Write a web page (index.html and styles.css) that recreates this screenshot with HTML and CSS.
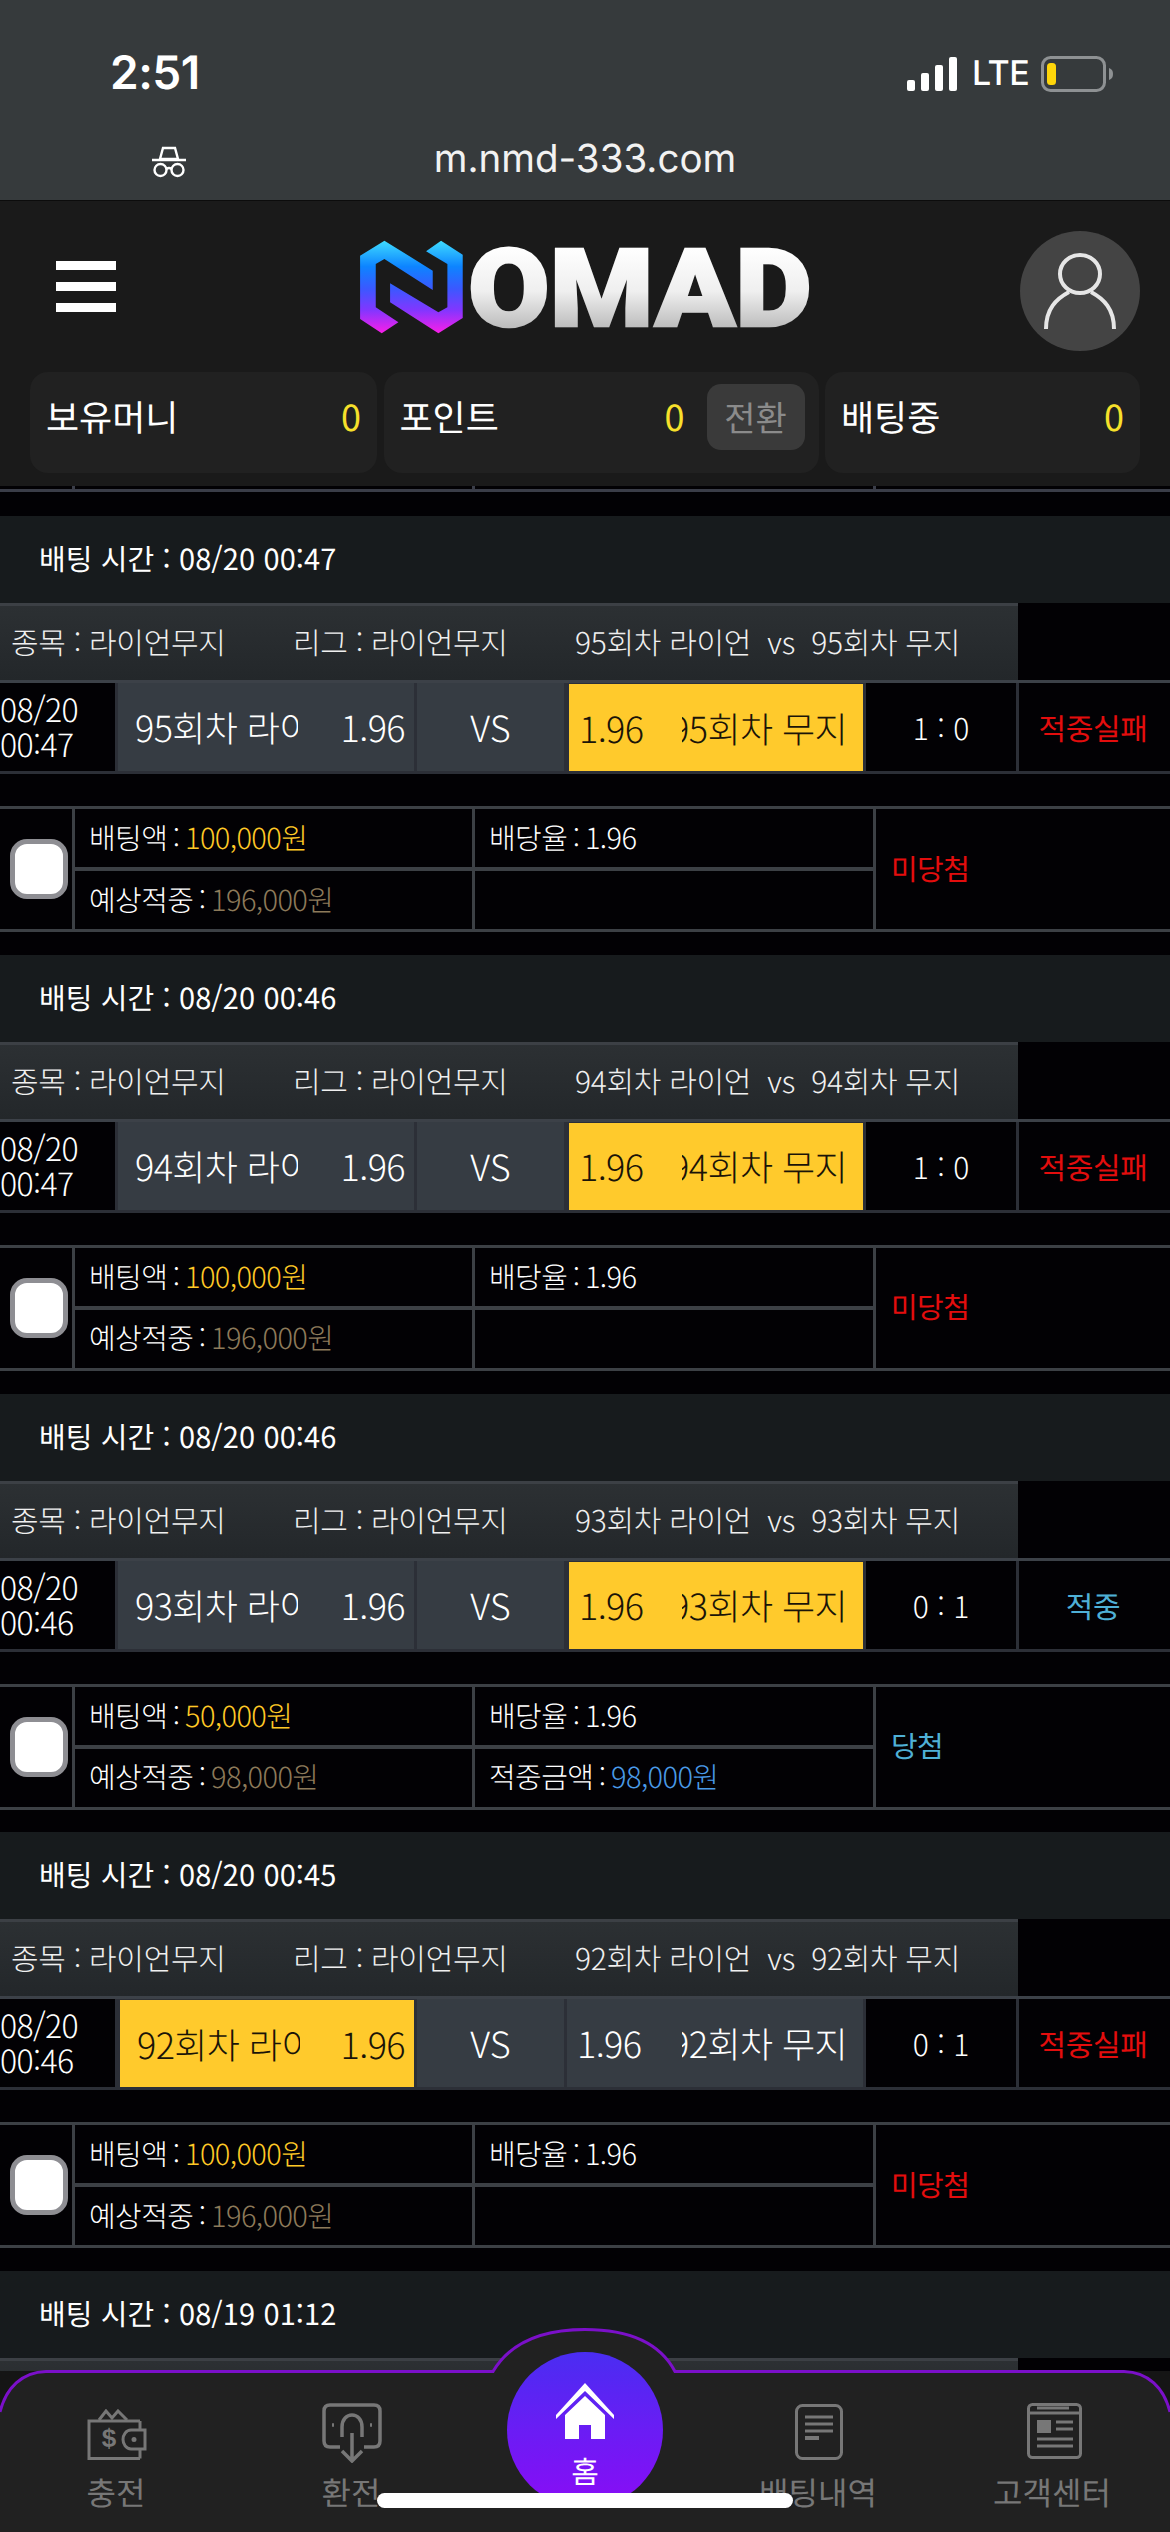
FILE: index.html
```html
<!DOCTYPE html>
<html lang="ko">
<head>
<meta charset="utf-8">
<title>NOMAD</title>
<link rel="stylesheet" href="styles.css">
</head>
<body>
<div class="chrome">
  <div class="status">
    <span class="clock">2:51</span>
    <div class="status-right">
      <svg class="signal" viewBox="0 0 51 34"><rect x="0" y="23" width="8" height="11" rx="2"/><rect x="14" y="16" width="8" height="18" rx="2"/><rect x="28" y="8" width="8" height="26" rx="2"/><rect x="42" y="0" width="8" height="34" rx="2"/></svg>
      <span class="lte">LTE</span>
      <svg class="battery" viewBox="0 0 72 36"><rect x="1.5" y="1.5" width="62" height="33" rx="8" fill="none" stroke="#8e9193" stroke-width="3"/><rect x="6" y="7" width="9" height="22" rx="3.5" fill="#ffd60a"/><path d="M68 12c3 1 4 3 4 6s-1 5-4 6z" fill="#8e9193"/></svg>
    </div>
  </div>
  <div class="urlbar">
    <svg class="spy" viewBox="0 0 36 32" fill="none" stroke="#fff" stroke-width="2.4"><path d="M12 2h12l3 11H9z"/><path d="M1 14h34"/><circle cx="9.5" cy="24" r="6"/><circle cx="26.5" cy="24" r="6"/><path d="M15.500 23q2.500-2 5 0"/></svg>
    <span class="url">m.nmd-333.com</span>
  </div>
</div>

<header class="site-head">
  <div class="topbar">
    <div class="burger"><i></i><i></i><i></i></div>
    <svg class="logo" viewBox="60 70 1400 310" aria-label="NOMAD">
      <defs>
        <linearGradient id="ng" x1="0" y1="0" x2="0" y2="1">
          <stop offset="0" stop-color="#3fdcff"/><stop offset=".28" stop-color="#0d84ff"/><stop offset=".52" stop-color="#3b58ff"/><stop offset=".75" stop-color="#8236ff"/><stop offset="1" stop-color="#fb1ee8"/>
        </linearGradient>
        <linearGradient id="sg" gradientUnits="userSpaceOnUse" x1="0" y1="110" x2="0" y2="350">
          <stop offset="0" stop-color="#ffffff"/><stop offset=".55" stop-color="#efefef"/><stop offset="1" stop-color="#bdbdbd"/>
        </linearGradient>
      </defs>
      <path fill="url(#ng)" d="M163 90L308 180V238L163 145L137 160V290L205 335L155 368L90 325V135Z"/>
      <path fill="url(#ng)" d="M333 90L398 132V322L325 368L180 275V218L325 305L352 290V160L288 122Z"/>
      <text class="logo-text" x="414" y="345" textLength="1032" lengthAdjust="spacingAndGlyphs" fill="url(#sg)" stroke="url(#sg)">OMAD</text>
    </svg>
    <div class="avatar">
      <svg viewBox="0 0 120 120" fill="none" stroke="#e6e6e6" stroke-width="4"><ellipse cx="60" cy="43" rx="20" ry="19"/><path d="M26 98C26 78 36 68 49 61"/><path d="M94 98C94 78 84 68 71 61"/></svg>
    </div>
  </div>
  <div class="wallets">
    <div class="wallet w-money"><span>보유머니</span><b>0</b></div>
    <div class="wallet w-point"><span>포인트</span><b>0</b><button class="swap">전환</button></div>
    <div class="wallet w-bet"><span>배팅중</span><b>0</b></div>
  </div>
</header>

<div class="prev-end"><i></i><i></i><i></i></div>

<main class="list">
  <section class="bet">
    <div class="bet-time">배팅 시간 : 08/20 00:47</div>
    <div class="info"><span class="i1">종목 : 라이언무지</span><span class="i2">리그 : 라이언무지</span><span class="i3">95회차 라이언&nbsp; vs&nbsp; 95회차 무지</span></div>
    <div class="match">
      <div class="c-time">08/20<br>00:47</div>
      <div class="c-team"><span class="home-name">95회차 라이언</span><span>1.96</span></div>
      <div class="c-vs">VS</div>
      <div class="c-team away on"><span>1.96</span><span class="away-name"><span>95회차 무지</span></span></div>
      <div class="c-score">1 : 0</div>
      <div class="c-result lose">적중실패</div>
    </div>
    <div class="detail">
      <div class="d-check"><input type="checkbox" class="check"></div>
      <div class="d-cell">배팅액 : <span class="amt">100,000원</span></div>
      <div class="d-cell">배당율 : 1.96</div>
      <div class="d-state lose">미당첨</div>
      <div class="d-cell">예상적중 : <span class="exp">196,000원</span></div>
      <div class="d-cell"></div>
    </div>
  </section>

  <section class="bet">
    <div class="bet-time">배팅 시간 : 08/20 00:46</div>
    <div class="info"><span class="i1">종목 : 라이언무지</span><span class="i2">리그 : 라이언무지</span><span class="i3">94회차 라이언&nbsp; vs&nbsp; 94회차 무지</span></div>
    <div class="match">
      <div class="c-time">08/20<br>00:47</div>
      <div class="c-team"><span class="home-name">94회차 라이언</span><span>1.96</span></div>
      <div class="c-vs">VS</div>
      <div class="c-team away on"><span>1.96</span><span class="away-name"><span>94회차 무지</span></span></div>
      <div class="c-score">1 : 0</div>
      <div class="c-result lose">적중실패</div>
    </div>
    <div class="detail">
      <div class="d-check"><input type="checkbox" class="check"></div>
      <div class="d-cell">배팅액 : <span class="amt">100,000원</span></div>
      <div class="d-cell">배당율 : 1.96</div>
      <div class="d-state lose">미당첨</div>
      <div class="d-cell">예상적중 : <span class="exp">196,000원</span></div>
      <div class="d-cell"></div>
    </div>
  </section>

  <section class="bet">
    <div class="bet-time">배팅 시간 : 08/20 00:46</div>
    <div class="info"><span class="i1">종목 : 라이언무지</span><span class="i2">리그 : 라이언무지</span><span class="i3">93회차 라이언&nbsp; vs&nbsp; 93회차 무지</span></div>
    <div class="match">
      <div class="c-time">08/20<br>00:46</div>
      <div class="c-team"><span class="home-name">93회차 라이언</span><span>1.96</span></div>
      <div class="c-vs">VS</div>
      <div class="c-team away on"><span>1.96</span><span class="away-name"><span>93회차 무지</span></span></div>
      <div class="c-score">0 : 1</div>
      <div class="c-result win">적중</div>
    </div>
    <div class="detail">
      <div class="d-check"><input type="checkbox" class="check"></div>
      <div class="d-cell">배팅액 : <span class="amt">50,000원</span></div>
      <div class="d-cell">배당율 : 1.96</div>
      <div class="d-state win">당첨</div>
      <div class="d-cell">예상적중 : <span class="exp">98,000원</span></div>
      <div class="d-cell">적중금액 : <span class="won">98,000원</span></div>
    </div>
  </section>

  <section class="bet">
    <div class="bet-time">배팅 시간 : 08/20 00:45</div>
    <div class="info"><span class="i1">종목 : 라이언무지</span><span class="i2">리그 : 라이언무지</span><span class="i3">92회차 라이언&nbsp; vs&nbsp; 92회차 무지</span></div>
    <div class="match">
      <div class="c-time">08/20<br>00:46</div>
      <div class="c-team on"><span class="home-name">92회차 라이언</span><span>1.96</span></div>
      <div class="c-vs">VS</div>
      <div class="c-team away"><span>1.96</span><span class="away-name"><span>92회차 무지</span></span></div>
      <div class="c-score">0 : 1</div>
      <div class="c-result lose">적중실패</div>
    </div>
    <div class="detail">
      <div class="d-check"><input type="checkbox" class="check"></div>
      <div class="d-cell">배팅액 : <span class="amt">100,000원</span></div>
      <div class="d-cell">배당율 : 1.96</div>
      <div class="d-state lose">미당첨</div>
      <div class="d-cell">예상적중 : <span class="exp">196,000원</span></div>
      <div class="d-cell"></div>
    </div>
  </section>

  <section class="bet last">
    <div class="bet-time">배팅 시간 : 08/19 01:12</div>
    <div class="info"></div>
  </section>
</main>

<nav class="tabbar">
  <svg class="tab-bg" viewBox="0 0 1170 204">
    <path fill="#151515" d="M0 43H1170V204H0Z"/>
    <path fill="#212121" d="M0 84C6 60 22 44 46 43.500H493C510 15 540 1.500 585 1.500C630 1.500 660 15 675 43.500H1124C1148 44 1164 60 1170 84V204H0Z"/>
    <path fill="none" stroke="#7b10c9" stroke-width="3" d="M0 84C6 60 22 44 46 43.500H493C510 15 540 1.500 585 1.500C630 1.500 660 15 675 43.500H1124C1148 44 1164 60 1170 84"/>
  </svg>
  <a class="tab t-charge">
    <svg class="ico-wallet" viewBox="0 0 60 51" fill="none" stroke="#777" stroke-width="3"><path d="M53 12H2V49.500H53"/><path d="M12 11l7-9 6 7 6-7 9 9"/><path d="M53 12V21M53 40V49.500"/><path d="M44 21H58V40H44C39 40 36 35 36 30.500C36 26 39 21 44 21Z"/><circle cx="47" cy="30.500" r="2.500" fill="#777" stroke="none"/><text class="dollar" x="22" y="38" text-anchor="middle" fill="#777" stroke="none">$</text></svg>
    <span>충전</span>
  </a>
  <a class="tab t-exchange">
    <svg class="ico-ex" viewBox="0 0 60 60" fill="none" stroke="#777" stroke-width="3.500"><path d="M18 44H8Q2 44 2 38V8Q2 2 8 2H52Q58 2 58 8V38Q58 44 52 44H42"/><path d="M20 34V24C20 16 25 12 30 12C35 12 40 16 40 24V34"/><path d="M30 30V57M20 48L30 58L40 48"/><path d="M10 22h2M48 22h2"/></svg>
    <span>환전</span>
  </a>
  <a class="tab t-home">
    <div class="home-disc">
      <svg class="ico-home" viewBox="0 0 58 56" fill="#fff"><path d="M29 0L58 32V36L29 8L0 36V32Z"/><path d="M29 13L49 32V56H35V42H23V56H9V32Z"/></svg>
      <span>홈</span>
    </div>
  </a>
  <a class="tab t-history">
    <svg class="ico-doc" viewBox="0 0 48 56" fill="none" stroke="#777" stroke-width="3"><rect x="1.500" y="1.500" width="45" height="53" rx="6"/><path d="M10 13H38M10 20H38M10 27H38"/><path d="M10 34H24" stroke-width="4"/></svg>
    <span>배팅내역</span>
  </a>
  <a class="tab t-support">
    <svg class="ico-news" viewBox="0 0 55 56" fill="none" stroke="#777" stroke-width="3"><rect x="1.500" y="1.500" width="52" height="53" rx="4"/><path d="M2 10H53M10 5H42" /><rect x="10" y="17" width="14" height="13" fill="#777" stroke="none"/><path d="M29 19H46M29 26H46M10 36H46M10 43H46"/></svg>
    <span>고객센터</span>
  </a>
</nav>
<div class="home-bar"></div>
</body>
</html>
```
FILE: styles.css
```css
* { box-sizing: border-box; }
html, body { margin: 0; padding: 0; }
html { height: 2532px; overflow: hidden; }
body {
  position: relative;
  width: 1170px;
  height: 2532px;
  overflow: hidden;
  background: #020104;
  color: #fff;
  font-family: "Noto Sans CJK KR", "Noto Sans", sans-serif;
  text-rendering: geometricPrecision;
}

/* browser chrome */
.chrome { height: 201px; background: #363a3c; border-bottom: 1px solid #0c0c0c; }
.status { height: 122px; padding: 0 57px 0 110px; display: flex; justify-content: space-between; align-items: flex-start; }
.clock { margin-top: 43px; font: 600 46px/60px Inter, sans-serif; letter-spacing: -.5px; }
.status-right { margin-top: 56px; display: flex; align-items: center; gap: 14px; }
.signal { width: 51px; height: 34px; fill: #fff; }
.lte { font: 500 34px/36px Inter, sans-serif; letter-spacing: -.5px; width: 55px; }
.battery { width: 72px; height: 36px; }
.urlbar { position: relative; height: 78px; display: flex; justify-content: center; align-items: flex-start; }
.spy { position: absolute; left: 151px; top: 24px; width: 36px; height: 32px; }
.url { margin-top: 13px; font: 400 38.500px/48px Inter, sans-serif; color: #f2f2f2; }

/* site header */
.site-head { height: 285px; background: #1a1a1a; padding-top: 30px; }
.topbar { height: 120px; display: flex; justify-content: space-between; align-items: flex-start; padding: 0 30px 0 56px; position: relative; }
.burger { width: 60px; margin-top: 30px; display: flex; flex-direction: column; gap: 12px; }
.burger i { display: block; height: 9px; background: #fff; }
.logo { position: absolute; left: 350px; top: 3px; width: 466.700px; height: 103.300px; }
.logo-text { font: 900 326px Roboto, sans-serif; stroke-width: 7; }
.avatar { width: 120px; height: 120px; border-radius: 50%; background: #444; }
.avatar svg { display: block; width: 120px; height: 120px; }
.wallets { margin-top: 21px; padding: 0 30px; display: grid; grid-template-columns: 347px 435px 315px; column-gap: 6.500px; }
.wallet { height: 101px; border-radius: 18px; background: #212121; display: flex; align-items: flex-start; padding: 12px 16px 0; font-size: 36px; line-height: 64px; font-weight: 400; }
.wallet span { flex: 1; }
.wallet b { font-weight: 400; color: #f7e02b; }
.swap { margin: 0 -2px 0 22px; width: 98px; height: 66px; border: 0; border-radius: 14px; background: #3a3a3a; color: #8b8b8b; font: 400 34px/66px "Noto Sans CJK KR", sans-serif; padding: 0; }

.prev-end { height: 6px; border-bottom: 3px solid #3a3d48; display: grid; grid-template-columns: 75px 400px 401px 1fr; }
.prev-end i { border-right: 3px solid #3a3d48; height: 3px; }

.list { padding-top: 24px; height: 2040px; overflow: hidden; }
.bet { height: 438.750px; }
.bet.last { height: 255px; }
.bet-time { height: 87px; padding: 0 39px; background: #171b1d; font-size: 29px; line-height: 84px; font-weight: 400; letter-spacing: .1px; }
.info { width: 1018px; height: 77px; position: relative; border-top: 3px solid #3c4045; background: linear-gradient(#2c3033, #23272a); font-size: 30px; font-weight: 300; line-height: 70px; color: #f0f0f0; letter-spacing: -.3px; white-space: nowrap; }
.info span { position: absolute; top: 0; }
.i1 { left: 11px; }
.i2 { left: 293px; }
.i3 { left: 575px; }

.match { height: 94px; display: grid; grid-template-columns: 118px 299px 150px 299px 153px 151px; border-top: 3px solid #3c4148; border-bottom: 3px solid #2c2f37; font-weight: 300; }
.match > div { display: flex; align-items: center; border-right: 3px solid #2c2f37; min-width: 0; }
.match > div:last-child { border-right: 0; }
.c-time { font-size: 32px; line-height: 35px; letter-spacing: -.6px; overflow: hidden; white-space: nowrap; }
.c-team { justify-content: space-between; background: #363c43; font-size: 36px; padding: 0 9px 0 17px; letter-spacing: -.6px; }
.c-team.away { padding: 0 16px 0 10px; }
.c-team.on { background: #ffca2c; color: #1a1408; }
.match > .c-team.on { border: 3px solid #2c2f37; border-width: 1px 3px 0 2px; }
.home-name { width: 163px; overflow: hidden; white-space: nowrap; }
.away-name { width: 165px; overflow: hidden; white-space: nowrap; display: flex; justify-content: flex-end; }
.away-name span { flex: none; }
.c-vs { justify-content: center; background: #363c43; font-size: 36px; }
.c-score { justify-content: center; font-size: 30px; font-weight: 300; }
.c-result { justify-content: center; font-size: 30px; font-weight: 400; letter-spacing: -.4px; padding-right: 3px; }
.lose { color: #e30d0d; }
.win { color: #4fb0d6; }

.detail { margin-top: 32px; height: 126px; display: grid; grid-template-columns: 75px 400px 401px 294px; grid-template-rows: 62px 58px; border-top: 3px solid #3c4045; border-bottom: 3px solid #3c4045; font-size: 29px; font-weight: 300; letter-spacing: -.6px; word-spacing: -2px; }
.d-check { grid-row: 1 / 3; border-right: 3px solid #3c4045; display: flex; align-items: center; padding-left: 10px; }
.check { appearance: none; -webkit-appearance: none; margin: 0; width: 58px; height: 60px; background: #fff; border: 5px solid #8e8e93; border-radius: 17px; }
.d-cell { display: flex; align-items: center; padding: 0 0 3px 14px; border-right: 3px solid #3c4045; white-space: pre-wrap; }
.d-cell:nth-child(2), .d-cell:nth-child(3) { border-bottom: 4px solid #3c4045; padding-bottom: 2px; }
.d-state { grid-row: 1 / 3; grid-column: 4; display: flex; align-items: center; padding: 0 0 3px 15px; font-weight: 400; }
.amt { color: #ffc926; }
.exp { color: #8d7a5a; }
.won { color: #4a9be8; }

/* tab bar */
.tabbar { position: absolute; left: 0; bottom: 0; width: 1170px; height: 204px; }
.tab-bg { position: absolute; inset: 0; width: 1170px; height: 204px; }
.tab { position: absolute; top: 0; bottom: 0; display: flex; flex-direction: column; align-items: center; color: #777; font-size: 32px; font-weight: 400; line-height: 44px; width: 200px; }
.tab span { position: absolute; top: 142px; }
.tab svg { position: absolute; }
.t-charge { left: 16px; }
.t-exchange { left: 251px; }
.t-home { left: 485px; }
.t-history { left: 718px; }
.t-support { left: 952px; }
.ico-wallet { left: 71px; top: 81px; width: 60px; height: 51px; }
.dollar { font: 700 26px "Liberation Sans", sans-serif; }
.ico-ex { left: 71px; top: 75px; width: 60px; height: 60px; }
.ico-doc { left: 77px; top: 76px; width: 48px; height: 56px; }
.ico-news { left: 75px; top: 75px; width: 55px; height: 56px; }
.home-disc { position: absolute; left: 22px; top: 24px; width: 156px; height: 156px; border-radius: 50%; background: linear-gradient(#4a2df2, #8a0cf6); color: #fff; font-size: 30px; }
.ico-home { left: 49px; top: 31px; width: 58px; height: 56px; }
.home-disc span { left: 0; right: 0; text-align: center; top: 96px; line-height: 44px; }
.home-bar { position: absolute; left: 377px; top: 2493px; width: 416px; height: 15px; border-radius: 8px; background: #fff; }
```
